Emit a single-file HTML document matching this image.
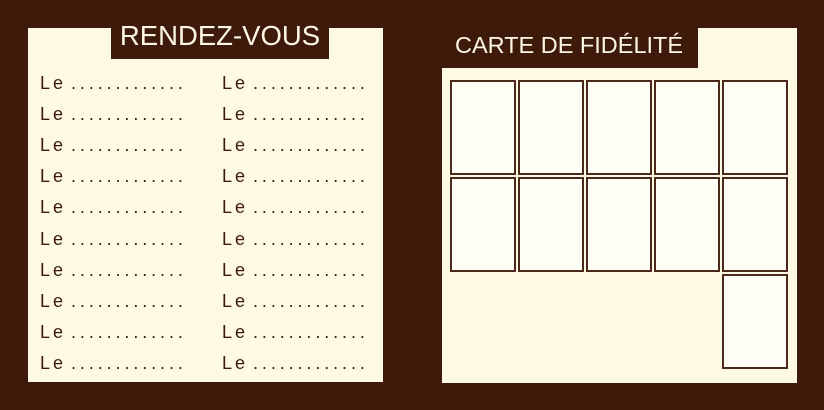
<!DOCTYPE html>
<html><head><meta charset="utf-8"><style>
*{margin:0;padding:0;box-sizing:border-box}
body{width:824px;height:410px;background:#3d1a0a;position:relative;overflow:hidden;font-family:"Liberation Sans",sans-serif}
.p{position:absolute;background:#fef9e3}
.notch{position:absolute;background:#3d1a0a;color:#fdf6e0;white-space:nowrap}
.row{position:absolute;font-size:18px;color:#3d1a0a;white-space:nowrap}
.row .l{letter-spacing:3px}
.row .d{letter-spacing:3.9px;margin-left:5px}
.b{position:absolute;width:66px;height:95px;border:2px solid #4b2a1c;background:#fffef6}
</style></head><body>
<div class="p" style="left:28px;top:28px;width:355px;height:354px"></div>
<div class="notch" style="left:111px;top:16px;width:218px;height:43px;font-size:27.5px;text-align:center;line-height:40px">RENDEZ-VOUS</div>
<div class="p" style="left:442px;top:28px;width:355px;height:355px"></div>
<div class="notch" style="left:436px;top:20px;width:262px;height:48px;font-size:23.5px;line-height:50px;padding-left:19px">CARTE DE FIDÉLITÉ</div>
<div id="rows"></div>
<script>
let h='';
for(let i=0;i<10;i++){const t=73+i*31.1;
h+=`<div class="row" style="left:40px;top:${t}px"><span class="l">Le</span><span class="d">.............</span></div>`;
h+=`<div class="row" style="left:222px;top:${t}px"><span class="l">Le</span><span class="d">.............</span></div>`;}
const xs=[450,518,586,654,722];
for(const x of xs){h+=`<div class="b" style="left:${x}px;top:80px"></div><div class="b" style="left:${x}px;top:177px"></div>`;}
h+=`<div class="b" style="left:722px;top:274px"></div>`;
document.getElementById('rows').innerHTML=h;
</script>
</body></html>
